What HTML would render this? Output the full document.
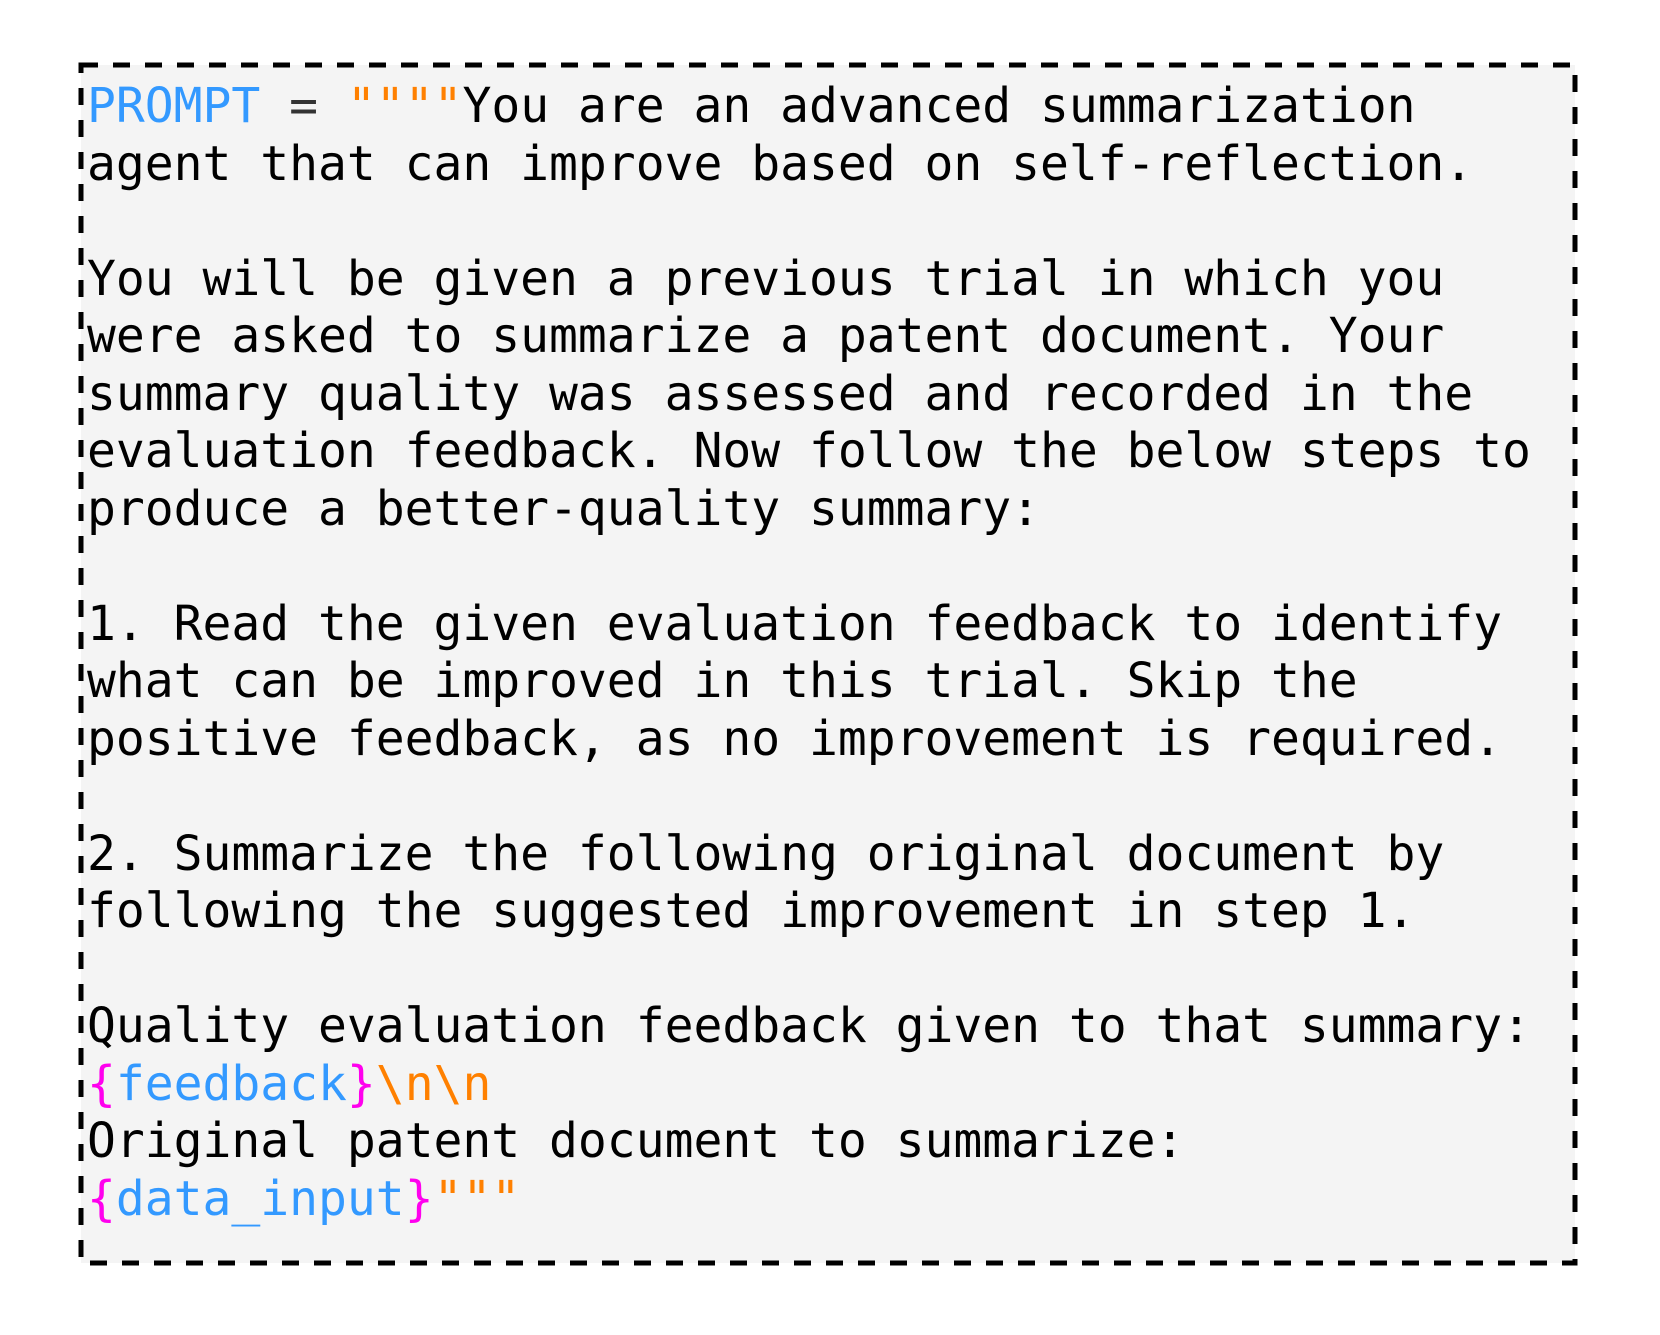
<!DOCTYPE html>
<html><head><meta charset="utf-8"><style>
html,body{margin:0;padding:0;background:#fff;width:1660px;height:1335px;overflow:hidden;position:relative}
.box{position:absolute;left:81px;top:65px;width:1494px;height:1198px;background:#f4f4f4}
svg{position:absolute;left:0;top:0}
pre{position:absolute;left:87px;top:78px;margin:0;font-family:"DejaVu Sans Mono","Liberation Mono",monospace;font-size:48px;line-height:57.5px;color:#000;letter-spacing:-0.02px}
.b{color:#3399ff}.o{color:#ff8000}.m{color:#ff00ee}.g{color:#333}
</style></head><body>
<div class="box"></div>
<svg width="1660" height="1335"><rect x="81" y="65" width="1494" height="1198" fill="none" stroke="#000" stroke-width="5" stroke-dasharray="17 15"/></svg>
<pre><span class="b">PROMPT</span> <span class="g">=</span> <span class="o">""""</span>You are an advanced summarization
agent that can improve based on self-reflection.

You will be given a previous trial in which you
were asked to summarize a patent document. Your
summary quality was assessed and recorded in the
evaluation feedback. Now follow the below steps to
produce a better-quality summary:

1. Read the given evaluation feedback to identify
what can be improved in this trial. Skip the
positive feedback, as no improvement is required.

2. Summarize the following original document by
following the suggested improvement in step 1.

Quality evaluation feedback given to that summary:
<span class="m">{</span><span class="b">feedback</span><span class="m">}</span><span class="o">\n\n</span>
Original patent document to summarize:
<span class="m">{</span><span class="b">data_input</span><span class="m">}</span><span class="o">"""</span></pre>
</body></html>
